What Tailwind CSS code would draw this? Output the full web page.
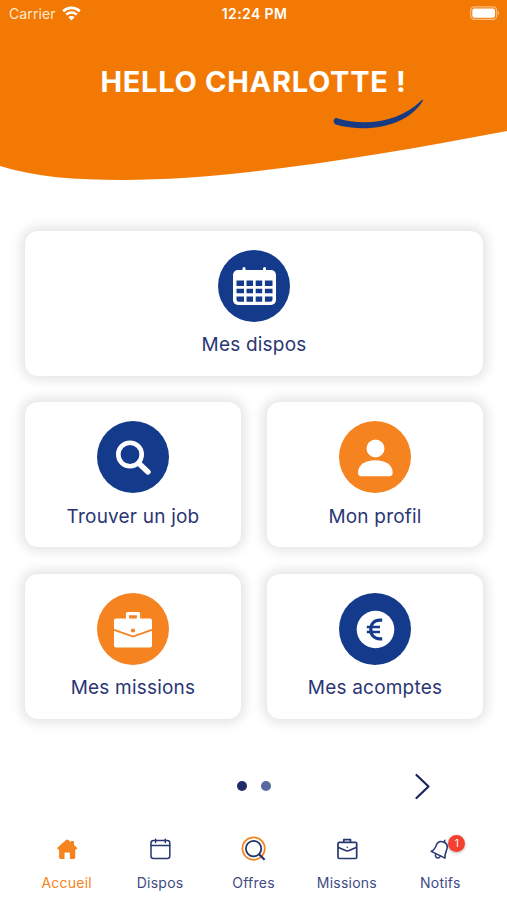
<!DOCTYPE html>
<html lang="fr">
<head>
    <meta charset="UTF-8">
    <meta name="viewport" content="width=device-width, initial-scale=1.0">
    <title>Accueil</title>
    <script src="https://cdn.jsdelivr.net/npm/@tailwindcss/browser@4"></script>
</head>
<body class="bg-white font-['Inter',sans-serif] text-[#2b3674] h-[900px] overflow-hidden flex flex-col">

    <!-- Header -->
    <header class="relative h-[230.5px] shrink-0 text-white">
        <svg class="absolute inset-0 -z-10" width="507" height="190" viewBox="0 0 507 190">
            <path fill="#f27a04" d="M0 0H507V131C370 157 230 180 123 180C75 180 35 177 0 166Z"/>
        </svg>

        <div class="grid grid-cols-3 items-center h-[26px] pl-[9px] pr-[7px]">
            <div class="flex items-center gap-[6px] text-[14px] tracking-[0.1px] text-[#ffe9cf]">
                <span>Carrier</span>
                <svg width="19" height="15" viewBox="0 0 19 15" fill="none" stroke="#fff" stroke-width="2.6">
                    <path d="M1.2 5.2C5.8 .8 13.2 .8 17.8 5.2"/>
                    <path d="M4.2 8.6C7.2 5.8 11.8 5.8 14.8 8.6"/>
                    <path fill="#fff" stroke="none" d="M9.5 14.4L6.3 11.1C8.1 9.5 10.9 9.5 12.7 11.1Z"/>
                </svg>
            </div>
            <div class="text-center text-[14px] font-semibold tracking-[0.4px] whitespace-nowrap">12:24 PM</div>
            <svg class="justify-self-end" width="30" height="14" viewBox="0 0 30 14">
                <rect x=".7" y=".9" width="26" height="12.4" rx="3.6" fill="none" stroke="#f9bd80" stroke-width="1.2"/>
                <rect x="2.3" y="2.5" width="22.8" height="9.2" rx="2.2" fill="#fff"/>
                <path d="M28 5.2C29.6 5.8 29.6 8.4 28 9Z" fill="#f9bd80"/>
            </svg>
        </div>

        <h1 class="mt-[36px] text-center text-[29px] leading-10 font-bold tracking-[0.7px] whitespace-nowrap">HELLO CHARLOTTE !</h1>
        <svg class="ml-[332px] -mt-[4px]" width="94" height="34" viewBox="332 98 94 34">
            <path fill="#183a80" d="M337 118.200C365 127 400 122 421.600 100.200C422.500 99.300 423.300 99.900 422.800 100.900C408 125 370 134 335.600 124.400C332.300 123 333.600 117.300 337 118.200Z"/>
        </svg>
    </header>

    <!-- Shortcuts -->
    <main class="grid grid-cols-2 gap-x-[26px] gap-y-[26.5px] pl-[25px] pr-6 text-[19px] leading-7 tracking-[0.2px]">
        <a class="col-span-2 h-[145px] pt-[19px] flex flex-col items-center gap-[9.5px] rounded-[13px] bg-white shadow-[0_0_12px_4px_rgba(0,0,0,0.11)]">
            <svg width="72" height="72" viewBox="0 0 72 72">
                <circle cx="36" cy="36" r="36" fill="#143b8b"/>
                <path d="M26 18.500V22M46.500 18.500V22" stroke="#fff" stroke-width="3" stroke-linecap="round"/>
                <rect x="15" y="20" width="43" height="35" rx="5" fill="#fff"/>
                <g fill="#143b8b">
                    <path d="M18.500 30.500h7.500v5.500h-7.500zM28.500 30.500h6.500v5.500h-6.500zM37.700 30.500h6.500v5.500h-6.500zM46.900 30.500h7.600v5.500h-7.600z"/>
                    <path d="M18.500 38.700h7.500v4.600h-7.500zM28.500 38.700h6.500v4.600h-6.500zM37.700 38.700h6.500v4.600h-6.500zM46.900 38.700h7.600v4.600h-7.600z"/>
                    <path d="M18.500 46.400h7.500v5.400h-5a2.500 2.500 0 0 1-2.500-2.500zM28.500 46.400h6.500v5.400h-6.500zM37.700 46.400h6.500v5.400h-6.500zM46.900 46.400h7.600v2.900a2.500 2.500 0 0 1-2.500 2.500h-5.100z"/>
                </g>
            </svg>
            <span>Mes dispos</span>
        </a>

        <a class="h-[145px] pt-[19px] flex flex-col items-center gap-[9.5px] rounded-[13px] bg-white shadow-[0_0_12px_4px_rgba(0,0,0,0.11)]">
            <svg width="72" height="72" viewBox="0 0 72 72">
                <circle cx="36" cy="36" r="36" fill="#143b8b"/>
                <circle cx="33" cy="33.500" r="11.700" fill="none" stroke="#fff" stroke-width="4.600"/>
                <path d="M41.500 42L51 51" stroke="#fff" stroke-width="5.400" stroke-linecap="round"/>
            </svg>
            <span>Trouver un job</span>
        </a>

        <a class="h-[145px] pt-[19px] flex flex-col items-center gap-[9.5px] rounded-[13px] bg-white shadow-[0_0_12px_4px_rgba(0,0,0,0.11)]">
            <svg width="72" height="72" viewBox="0 0 72 72">
                <circle cx="36" cy="36" r="36" fill="#f58320"/>
                <circle cx="36.500" cy="27.500" r="9" fill="#fff"/>
                <path fill="#fff" d="M19 51.500C19 43.500 27 39.300 36.300 39.300S53.700 43.500 53.700 51.500C53.700 54 52.500 55.300 50.500 55.300H22.200C20.200 55.300 19 54 19 51.500Z"/>
            </svg>
            <span>Mon profil</span>
        </a>

        <a class="h-[145px] pt-[19px] flex flex-col items-center gap-[9.5px] rounded-[13px] bg-white shadow-[0_0_12px_4px_rgba(0,0,0,0.11)]">
            <svg width="72" height="72" viewBox="0 0 72 72">
                <circle cx="36" cy="36" r="36" fill="#f58320"/>
                <path d="M30.500 27V20.700H41.500V27" fill="none" stroke="#fff" stroke-width="3.200" stroke-linejoin="round"/>
                <rect x="17" y="25.500" width="38" height="29" rx="2" fill="#fff"/>
                <path d="M16.500 36.600L36 43.600L55.500 36.600" fill="none" stroke="#f58320" stroke-width="1.900"/>
                <circle cx="36" cy="37.500" r="2.100" fill="#f58320"/>
            </svg>
            <span>Mes missions</span>
        </a>

        <a class="h-[145px] pt-[19px] flex flex-col items-center gap-[9.5px] rounded-[13px] bg-white shadow-[0_0_12px_4px_rgba(0,0,0,0.11)]">
            <svg width="72" height="72" viewBox="0 0 72 72">
                <circle cx="36" cy="36" r="36" fill="#143b8b"/>
                <circle cx="36.500" cy="36.500" r="18.800" fill="#fff"/>
                <path d="M43.200 27.200H41C35 27.200 31.800 31 31.800 36.500S35 45.800 41 45.800H43.200" fill="none" stroke="#143b8b" stroke-width="3.200"/>
                <path d="M27.800 33.900H41M27.800 39.100H41" fill="none" stroke="#143b8b" stroke-width="2.500"/>
            </svg>
            <span>Mes acomptes</span>
        </a>
    </main>

    <!-- Pagination -->
    <div class="mt-[51px] h-8 shrink-0 grid grid-cols-[1fr_auto_1fr] items-center">
        <span></span>
        <div class="flex gap-[14px]">
            <span class="size-[10px] rounded-full bg-[#1f2c66]"></span>
            <span class="size-[10px] rounded-full bg-[#5a68a2]"></span>
        </div>
        <svg class="ml-[143px]" width="17" height="28" viewBox="0 0 17 28" fill="none" stroke="#1b2459" stroke-width="2.200" stroke-linecap="round" stroke-linejoin="round">
            <path d="M2.500 3L14.500 14.500L2.500 26"/>
        </svg>
    </div>

    <!-- Tab bar -->
    <nav class="mt-[33px] px-5 grid grid-cols-5 text-[14px] leading-5 tracking-[0.25px] text-[#414b82]">
        <a class="flex flex-col items-center gap-[10px] text-[#f58320]">
            <svg width="28" height="28" viewBox="0 0 28 28" fill="#f58320">
                <path d="M13 5.100Q14.200 4.100 15.400 5.100L17.800 7.200V6.600Q17.800 6 18.400 6H20.400Q21 6 21 6.600V10L23.800 12.600Q24.900 14.200 23.200 14.400H22.300V22.300Q22.300 24 20.600 24H16.900V18.400Q16.900 17.600 16.100 17.600H12.300Q11.500 17.600 11.500 18.400V24H7.800Q6.100 24 6.100 22.300V14.400H5.200Q3.500 14.200 4.600 12.600Z"/>
            </svg>
            <span>Accueil</span>
        </a>
        <a class="flex flex-col items-center gap-[10px]">
            <svg width="28" height="28" viewBox="0 0 28 28" fill="none" stroke="#26386e" stroke-width="1.500" stroke-linecap="round">
                <rect x="5" y="5.500" width="18.800" height="18" rx="2.500"/>
                <path d="M5 10.500H23.800M9.600 4.200V7.500M19.300 4.200V7.500"/>
            </svg>
            <span>Dispos</span>
        </a>
        <a class="flex flex-col items-center gap-[10px]">
            <svg width="28" height="28" viewBox="0 0 28 28" fill="none">
                <circle cx="14.600" cy="13.600" r="11.200" stroke="#f58320" stroke-width="1.700"/>
                <circle cx="14.600" cy="13.600" r="7.700" stroke="#1f3566" stroke-width="1.800"/>
                <path d="M19.800 19L25.600 24.700" stroke="#1f3566" stroke-width="2.200"/>
            </svg>
            <span>Offres</span>
        </a>
        <a class="flex flex-col items-center gap-[10px]">
            <svg width="28" height="28" viewBox="0 0 28 28" fill="none" stroke="#26386e" stroke-width="1.700" stroke-linejoin="round">
                <path d="M10.800 7V4.600H17.500V7"/>
                <rect x="5" y="7.300" width="18.700" height="16.200" rx="1.200"/>
                <path d="M5 12.300L12.500 15.500Q14.300 16.200 16.100 15.500L23.700 12.300"/>
                <circle cx="14.300" cy="12.300" r=".8" fill="#26386e" stroke="none"/>
            </svg>
            <span>Missions</span>
        </a>
        <a class="flex flex-col items-center gap-[10px]">
            <span class="relative">
                <svg width="28" height="28" viewBox="0 0 28 28" fill="none" stroke="#26386e" stroke-width="1.500" stroke-linejoin="round" stroke-linecap="round">
                    <path d="M5.200 16.300C8.500 15 9.200 13 10.200 10.300C11.500 6.700 14.500 5.600 17.800 7C21 8.400 22 11.200 20.700 14.700C19.700 17.500 18.500 19.500 19 23.200Z"/>
                    <path d="M18.200 7L18.900 5.200M9.800 18.500C8.800 21 10 22.700 11.300 22.900C12.800 23.100 14 22.300 14.500 20.800"/>
                </svg>
                <span class="absolute left-[22px] top-0 size-[17px] rounded-full bg-[#f5402f] text-white text-[10px] leading-[17px] tracking-normal text-center shadow-[0_1px_3px_rgba(0,0,0,0.3)]">1</span>
            </span>
            <span>Notifs</span>
        </a>
    </nav>

</body>
</html>
